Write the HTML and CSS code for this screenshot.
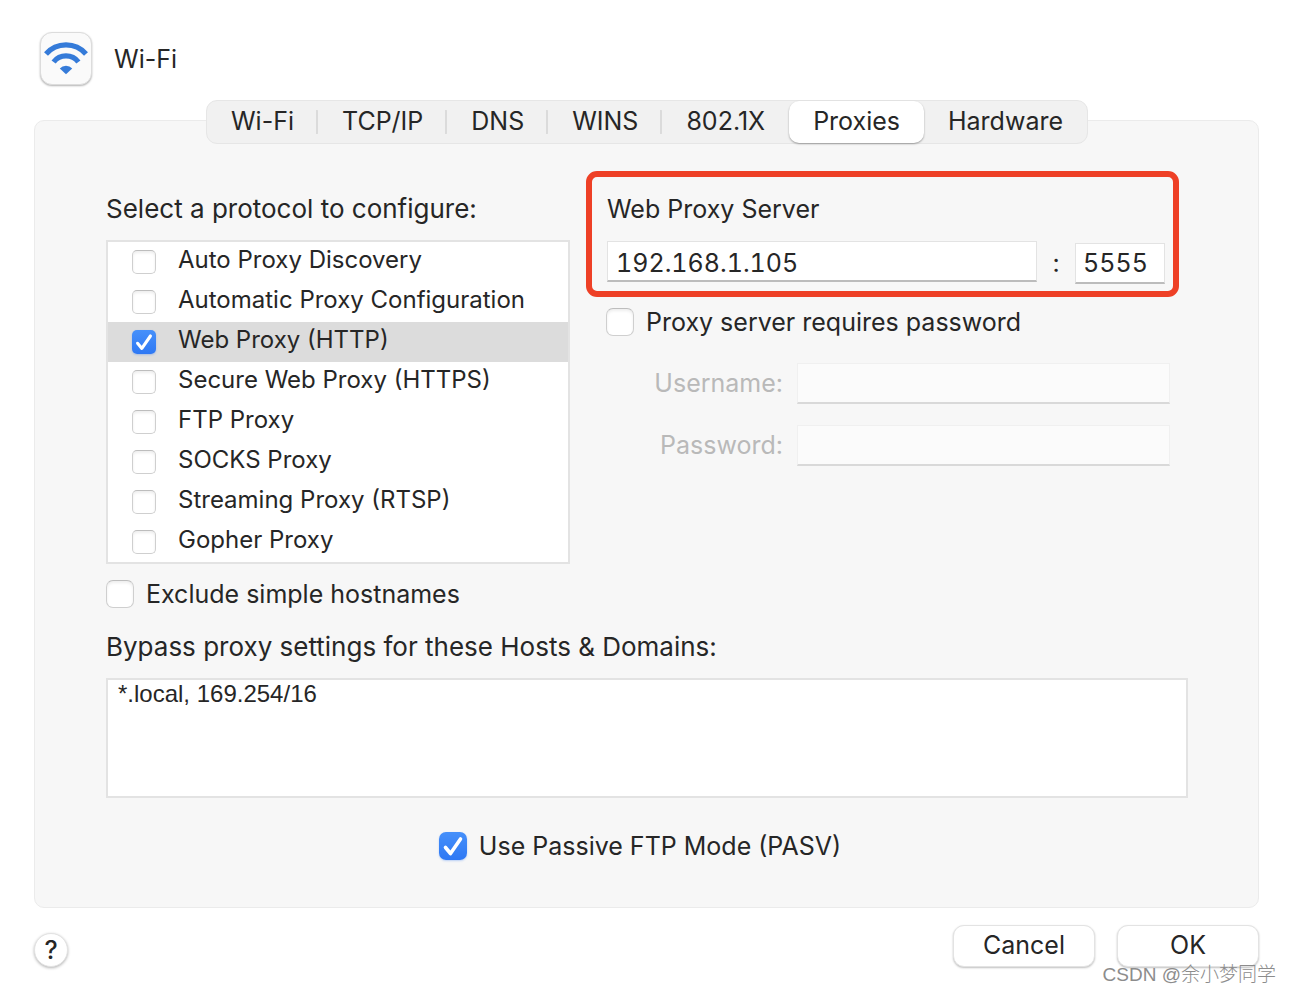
FILE: index.html
```html
<!doctype html>
<html lang="en">
<head>
	<meta charset="UTF-8">
	<meta name="viewport" content="width=device-width,initial-scale=1.0">
	<title>Wi-Fi</title>
	<link rel="stylesheet" href="styles.css">
</head>
<body>
	<div class="header">
		<div class="wifi-icon">
			<svg viewBox="0 0 50 50" width="50" height="50">
				<g fill="none" stroke="#357bd9" stroke-width="5.2">
					<path d="M5 21a26.5 26.5 0 0 1 40 0"/>
					<path d="M12.6 29a15.6 15.6 0 0 1 24.8 0"/>
				</g>
				<path fill="#357bd9" d="M18.8 35.6a8.3 8.3 0 0 1 12.4 0L25 41.3z"/>
			</svg>
		</div>
		<h1>Wi-Fi</h1>
	</div>

	<div class="panel">
		<div class="tabs" role="tablist">
			<button class="tab line" role="tab">Wi-Fi</button>
			<button class="tab line" role="tab">TCP/IP</button>
			<button class="tab line" role="tab">DNS</button>
			<button class="tab line" role="tab">WINS</button>
			<button class="tab" role="tab">802.1X</button>
			<button class="tab active" role="tab" aria-selected="true">Proxies</button>
			<button class="tab" role="tab">Hardware</button>
		</div>

		<div class="columns">
			<div class="protocols">
				<h2 class="prompt">Select a protocol to configure:</h2>
				<ul class="list">
					<li><label><input type="checkbox"><span>Auto Proxy Discovery</span></label></li>
					<li><label><input type="checkbox"><span>Automatic Proxy Configuration</span></label></li>
					<li class="selected"><label><input type="checkbox" checked><span>Web Proxy (HTTP)</span></label></li>
					<li><label><input type="checkbox"><span>Secure Web Proxy (HTTPS)</span></label></li>
					<li><label><input type="checkbox"><span>FTP Proxy</span></label></li>
					<li><label><input type="checkbox"><span>SOCKS Proxy</span></label></li>
					<li><label><input type="checkbox"><span>Streaming Proxy (RTSP)</span></label></li>
					<li><label><input type="checkbox"><span>Gopher Proxy</span></label></li>
				</ul>
			</div>
			<div class="server">
				<div class="marked">
					<h2>Web Proxy Server</h2>
					<div class="address">
						<input class="field host" type="text" value="192.168.1.105" aria-label="Web Proxy Server">
						<span class="colon">:</span>
						<input class="field port" type="text" value="5555" aria-label="Port">
					</div>
				</div>
				<label class="check need-password"><input type="checkbox">Proxy server requires password</label>
				<div class="login">
					<label for="username">Username:</label>
					<input class="field" id="username" type="text" disabled>
					<label for="password">Password:</label>
					<input class="field" id="password" type="password" disabled>
				</div>
			</div>
		</div>

		<label class="check exclude"><input type="checkbox">Exclude simple hostnames</label>
		<label class="prompt" for="bypass">Bypass proxy settings for these Hosts &amp; Domains:</label>
		<textarea class="bypass" id="bypass">*.local, 169.254/16</textarea>
		<label class="check passive"><input type="checkbox" checked>Use Passive FTP Mode (PASV)</label>
	</div>

	<div class="footer">
		<button class="help" aria-label="Help">?</button>
		<button class="btn">Cancel</button>
		<button class="btn">OK</button>
	</div>
	<div class="watermark">CSDN @余小梦同学</div>
</body>
</html>
```
FILE: styles.css
```css
*{
	box-sizing: border-box;
	margin: 0;
	padding: 0;
}
body{
	position: relative;
	padding: 32px 31px 27px 34px;
	background: #fff;
	color: #262626;
	font-family: Inter, "Liberation Sans", "Noto Sans CJK SC", sans-serif;
	font-size: 25px;
	line-height: 36px;
}
button, input, textarea{
	font: inherit;
	color: inherit;
}
h1, h2{
	font-size: 25px;
	font-weight: 400;
}
.header{
	display: flex;
	align-items: center;
	gap: 22px;
	padding-left: 6px;
	margin-bottom: 35px;
}
.wifi-icon{
	width: 52px;
	height: 53px;
	border: 1px solid #dcdcdc;
	border-radius: 12px;
	background: #fafafa;
	box-shadow: 0 1px 2px rgba(0,0,0,.3);
}
.wifi-icon svg{
	display: block;
}
.panel{
	padding: 0 70px 47px 71px;
	border: 1px solid #ebebeb;
	border-radius: 10px;
	background: #f7f7f7;
}
.tabs{
	display: flex;
	width: 882px;
	max-width: 100%;
	height: 44px;
	margin: -21px auto 27px;
	border: 1px solid #e6e6e6;
	border-radius: 11px;
	background: #f1f1f1;
}
.tab{
	flex: 1 1 auto;
	padding-bottom: 2px;
	border: 0;
	border-radius: 10px;
	background: transparent;
}
.tab.line{
	background: linear-gradient(#dbdbdb, #dbdbdb) no-repeat right center / 2px 24px;
}
.tab.active{
	background: #fff;
	box-shadow: 0 1px 2px rgba(0,0,0,.35);
}
.columns{
	display: grid;
	grid-template-columns: 464fr 593fr;
	gap: 16px;
	margin-right: 9px;
}
.protocols{
	padding-top: 20px;
}
.prompt{
	display: block;
	margin-bottom: 13px;
	font-size: 26px;
}
.list{
	border: 2px solid #e3e3e3;
	background: #fff;
	list-style: none;
	font-size: 24px;
}
.list label{
	display: flex;
	align-items: center;
	gap: 22px;
	height: 40px;
	padding-left: 24px;
}
.list span{
	padding-bottom: 4px;
}
.selected{
	background: #dcdcdc;
}
input[type=checkbox]{
	appearance: none;
	flex: none;
	width: 28px;
	height: 28px;
	border: 1px solid #cfcfcf;
	border-top-color: #bdbdbd;
	border-radius: 7px;
	background: #fff;
	box-shadow: inset 0 2px 3px rgba(0,0,0,.07);
}
.list input[type=checkbox]{
	width: 24px;
	height: 24px;
	border-radius: 5px;
}
input[type=checkbox]:checked{
	border: 0;
	background: url("data:image/svg+xml,%3Csvg xmlns='http://www.w3.org/2000/svg' viewBox='0 0 28 28'%3E%3Cpath d='M6.5 15.5l5 6L21.5 7' fill='none' stroke='white' stroke-width='3.6' stroke-linecap='round' stroke-linejoin='round'/%3E%3C/svg%3E") center / 100%, linear-gradient(#4690fa, #2e78f4);
	box-shadow: 0 1px 2px rgba(46,120,244,.3);
}
.marked{
	padding: 14px 8px 7px 15px;
	border: 6px solid #ee4026;
	border-radius: 11px;
}
.marked h2{
	margin-bottom: 14px;
}
.address{
	display: flex;
	height: 43px;
}
.field{
	min-width: 0;
	height: 41px;
	padding: 0 8px;
	border: 1px solid #e3e3e3;
	border-bottom: 2px solid #bcbcbc;
	background: #fff;
	font-variant-numeric: tabular-nums;
}
.host{
	flex: 1;
	padding-top: 4px;
}
.colon{
	width: 38px;
	line-height: 44px;
	text-align: center;
}
.port{
	align-self: flex-end;
	width: 90px;
	padding: 0 7px;
}
.check{
	display: flex;
	align-items: center;
	gap: 12px;
	height: 28px;
}
.need-password{
	margin: 11px 0 27px 20px;
}
.login{
	display: grid;
	grid-template-columns: 177px 1fr;
	align-items: center;
	gap: 21px 14px;
	margin: 0 9px 0 20px;
	color: #b9b9b9;
	text-align: right;
}
.login label{
	padding-bottom: 2px;
}
.field:disabled{
	border-color: #f0f0f0;
	border-bottom-color: #d9d9d9;
	background: #fbfbfb;
}
.exclude{
	margin: 16px 0 21px;
}
.bypass{
	display: block;
	width: 100%;
	height: 120px;
	padding: 0 10px;
	border: 2px solid #e3e3e3;
	background: #fff;
	font-family: "Liberation Sans", Arial, sans-serif;
	font-size: 24px;
	line-height: 28px;
	resize: none;
}
.passive{
	justify-content: center;
	margin: 34px 14px 0 0;
}
.footer{
	display: flex;
	align-items: flex-end;
	gap: 22px;
	margin-top: 17px;
}
.help{
	width: 34px;
	height: 34px;
	margin-right: auto;
	border: 1px solid #e3e3e3;
	border-radius: 50%;
	background: #fff;
	box-shadow: 0 1px 3px rgba(0,0,0,.3);
	font-weight: 500;
	line-height: 32px;
}
.btn{
	width: 142px;
	height: 42px;
	padding-bottom: 2px;
	border: 1px solid #e3e3e3;
	border-radius: 11px;
	background: #fff;
	box-shadow: 0 1px 2px rgba(0,0,0,.25);
}
.watermark{
	position: absolute;
	right: 14px;
	bottom: 1px;
	color: #8c8c8c;
	font-family: "Liberation Sans", "Noto Sans CJK SC", sans-serif;
	font-size: 19px;
	font-weight: 300;
}
```
